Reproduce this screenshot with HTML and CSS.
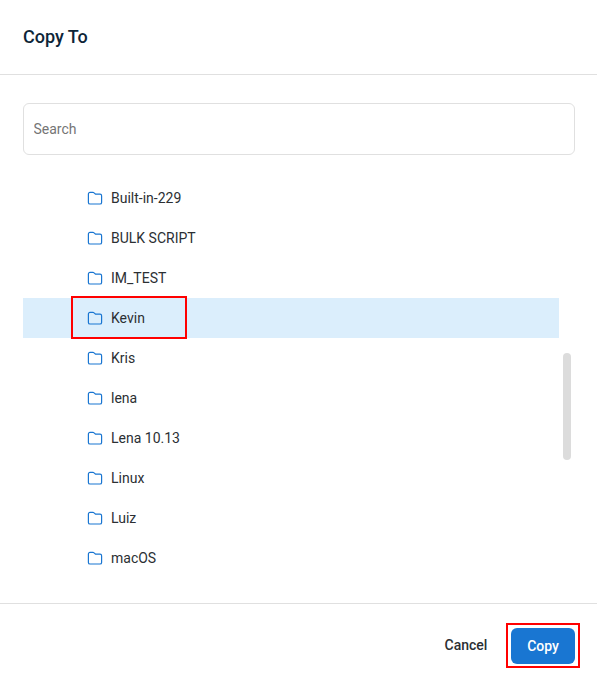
FILE: index.html
```html
<!DOCTYPE html>
<html lang="en">
<head>
<meta charset="utf-8">
<title>Copy To</title>
<link rel="stylesheet" href="styles.css">
</head>
<body>
<svg class="defs" width="0" height="0" aria-hidden="true">
  <symbol id="folder" viewBox="0 0 16 14">
    <path d="M1.4 3a1.6 1.6 0 0 1 1.6-1.6h2.9c.5 0 .9.2 1.2.5L8.6 3.2h4.4A1.6 1.6 0 0 1 14.6 4.8v6.6a1.6 1.6 0 0 1-1.6 1.6H3a1.6 1.6 0 0 1-1.6-1.6z" fill="none" stroke="#1976d2" stroke-width="1.2" stroke-linejoin="round"/>
  </symbol>
</svg>
<main class="dialog">
  <header class="dialog-header"><h1 class="title">Copy To</h1></header>
  <section class="dialog-body">
    <input class="search" type="text" placeholder="Search">
    <div class="list-wrap">
      <ul class="tree">
        <li class="row"><svg class="icon"><use href="#folder"/></svg><span>Built-in-229</span></li>
        <li class="row"><svg class="icon"><use href="#folder"/></svg><span>BULK SCRIPT</span></li>
        <li class="row"><svg class="icon"><use href="#folder"/></svg><span>IM_TEST</span></li>
        <li class="row selected"><svg class="icon"><use href="#folder"/></svg><span>Kevin</span><i class="mark mark-row"></i></li>
        <li class="row"><svg class="icon"><use href="#folder"/></svg><span>Kris</span></li>
        <li class="row"><svg class="icon"><use href="#folder"/></svg><span>lena</span></li>
        <li class="row"><svg class="icon"><use href="#folder"/></svg><span>Lena 10.13</span></li>
        <li class="row"><svg class="icon"><use href="#folder"/></svg><span>Linux</span></li>
        <li class="row"><svg class="icon"><use href="#folder"/></svg><span>Luiz</span></li>
        <li class="row"><svg class="icon"><use href="#folder"/></svg><span>macOS</span></li>
      </ul>
      <div class="scroll-thumb"></div>
    </div>
  </section>
  <footer class="dialog-footer">
    <button class="btn btn-text" type="button">Cancel</button>
    <div class="copy-wrap">
      <button class="btn btn-primary" type="button">Copy</button>
      <i class="mark mark-btn"></i>
    </div>
  </footer>
</main>
</body>
</html>
```
FILE: styles.css
```css
* { box-sizing: border-box; }
html, body { margin: 0; padding: 0; }
body {
  width: 597px;
  height: 688px;
  overflow: hidden;
  background: #fff;
  font-family: Roboto, "Liberation Sans", sans-serif;
  color: #2b2f33;
}
.defs { position: absolute; }
.dialog { display: flex; flex-direction: column; height: 688px; }
.dialog-header {
  height: 75px;
  padding: 0 23px;
  display: flex;
  align-items: center;
  border-bottom: 1px solid #e0e0e0;
}
.title {
  margin: 0;
  font-size: 18px;
  line-height: 24px;
  font-weight: 500;
  color: #0d2538;
}
.dialog-body {
  flex: 1;
  padding: 28px 22px 0 23px;
  display: flex;
  flex-direction: column;
  min-height: 0;
}
.search {
  display: block;
  width: 552px;
  height: 52px;
  flex: none;
  padding: 0 9.5px;
  border: 1px solid #e0e0e0;
  border-radius: 6px;
  font: 14px Roboto, "Liberation Sans", sans-serif;
  color: #2b2f33;
  outline: none;
}
.search::placeholder { color: #757575; opacity: 1; }
.list-wrap { flex: 1; position: relative; padding-top: 23px; }
.tree { list-style: none; margin: 0; padding: 0; width: 536px; }
.row {
  position: relative;
  display: flex;
  align-items: center;
  height: 40px;
  padding-left: 64px;
  font-size: 14px;
  color: #2b2f33;
}
.row.selected { background: #dbeefc; }
.icon { width: 16px; height: 14px; margin-right: 8px; flex: none; }
.scroll-thumb {
  position: absolute;
  left: 540px;
  top: 198px;
  width: 8px;
  height: 107px;
  border-radius: 4px;
  background: #dcdcdc;
}
.dialog-footer {
  height: 85px;
  flex: none;
  padding: 24px 22px 0 0;
  display: flex;
  justify-content: flex-end;
  align-items: flex-start;
  border-top: 1px solid #e0e0e0;
}
.btn {
  height: 36px;
  border: 0;
  border-radius: 6px;
  font: 500 14px Roboto, "Liberation Sans", sans-serif;
  background: transparent;
  padding: 0;
}
.btn-text { width: 44px; margin-right: 23px; padding-bottom: 2px; color: #2b2f33; }
.btn-primary { display: block; width: 64px; background: #1976d2; color: #fff; }
.copy-wrap { position: relative; }
.mark { position: absolute; border: 2px solid #f00; display: block; }
.mark-row { left: 48px; top: -2px; width: 116px; height: 43px; }
.mark-btn { left: -5px; top: -5px; width: 74px; height: 45px; }
```
